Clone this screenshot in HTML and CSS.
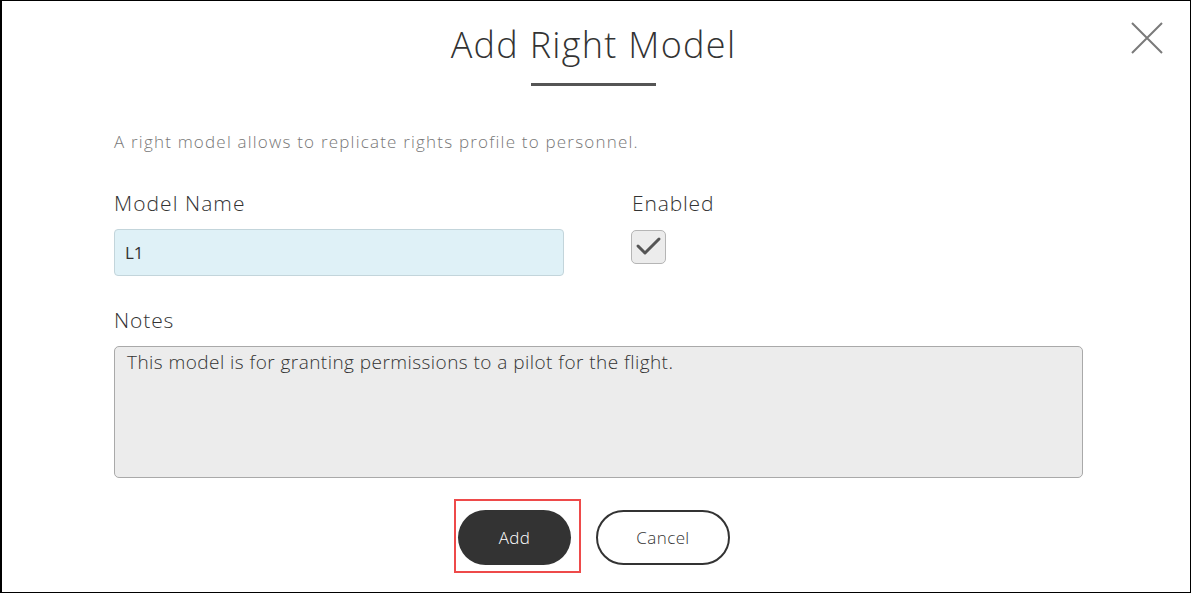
FILE: index.html
```html
<!DOCTYPE html>
<html>
<head>
<meta charset="utf-8">
<link rel="stylesheet" href="styles.css">
</head>
<body>
<div class="dialog">
  <button class="close" aria-label="Close">
    <svg width="32" height="32" viewBox="0 0 32 32"><path d="M1 1 L31 31 M31 1 L1 31" stroke="#7a7a7a" stroke-width="2" fill="none"/></svg>
  </button>
  <div class="header">
    <h1 class="title">Add Right Model</h1>
    <div class="rule"></div>
  </div>
  <div class="content">
    <p class="desc">A right model allows to replicate rights profile to personnel.</p>
    <div class="row">
      <div class="field name-field">
        <label class="label">Model Name</label>
        <div class="input">L1</div>
      </div>
      <div class="field">
        <label class="label label-enabled">Enabled</label>
        <div class="checkbox">
          <svg width="34" height="34" viewBox="0 0 34 34"><path d="M7 16 L14 23 L28 9" stroke="#555" stroke-width="3" fill="none" stroke-linecap="round" stroke-linejoin="round"/></svg>
        </div>
      </div>
    </div>
    <label class="label notes-label">Notes</label>
    <div class="textarea">This model is for granting permissions to a pilot for the flight.</div>
    <div class="actions">
      <span class="highlight"><button class="btn btn-primary">Add</button></span>
      <button class="btn btn-secondary">Cancel</button>
    </div>
  </div>
</div>
</body>
</html>
```
FILE: styles.css
```css
html, body {
  margin: 0;
  padding: 0;
  background: #fff;
}
.dialog {
  box-sizing: border-box;
  width: 1191px;
  height: 593px;
  border: 1px solid #000;
  border-left-width: 2px;
  position: relative;
  font-family: "Open Sans", Lato, sans-serif;
  color: #333;
}
.close {
  position: absolute;
  top: 21px;
  right: 27px;
  width: 32px;
  height: 32px;
  padding: 0;
  border: 0;
  background: none;
}
.close svg { display: block; }
.header {
  padding-top: 22px;
  padding-right: 5px;
  text-align: center;
}
.title {
  margin: 0;
  font-size: 36px;
  font-weight: 300;
  line-height: 44px;
  letter-spacing: 1.3px;
  color: #333;
}
.rule {
  width: 125px;
  height: 3px;
  background: #555;
  margin: 16px auto 0;
}
.content {
  padding: 0 107px 0 112px;
}
.desc {
  margin: 45px 0 0;
  font-size: 17px;
  line-height: 22px;
  letter-spacing: 1.2px;
  color: #777;
  font-weight: 300;
}
.row {
  display: flex;
  gap: 68px;
  margin-top: 37px;
}
.field {
  display: flex;
  flex-direction: column;
}
.name-field {
  width: 450px;
}
.label {
  display: block;
  font-size: 21px;
  line-height: 26px;
  letter-spacing: 1.05px;
  font-weight: 300;
  color: #333;
}
.label-enabled {
  letter-spacing: 0.85px;
}
.input {
  box-sizing: border-box;
  margin-top: 13px;
  height: 47px;
  background: #dff1f7;
  border: 1px solid #c3d5db;
  border-radius: 4px;
  padding: 0 10px;
  font-size: 17px;
  font-weight: 400;
  line-height: 45px;
  color: #333;
}
.checkbox {
  box-sizing: border-box;
  margin-top: 14px;
  width: 35px;
  height: 34px;
  background: #ececec;
  border: 1px solid #b5b5b5;
  border-radius: 5px;
  position: relative;
  left: -1px;
}
.checkbox svg {
  display: block;
  margin: -1px;
}
.notes-label {
  margin-top: 31px;
  letter-spacing: 0.9px;
}
.textarea {
  box-sizing: border-box;
  margin-top: 13px;
  height: 132px;
  background: #ececec;
  border: 1px solid #a9a9a9;
  border-radius: 5px;
  padding: 3px 12px;
  font-size: 19px;
  font-weight: 300;
  line-height: 24px;
  letter-spacing: 0.45px;
  color: #333;
}
.actions {
  display: flex;
  justify-content: center;
  gap: 25px;
  margin-top: 32px;
  padding-right: 9px;
}
.highlight {
  position: relative;
  display: block;
}
.highlight::after {
  content: "";
  position: absolute;
  left: -4px;
  top: -11px;
  right: -10px;
  bottom: -8px;
  border: 2px solid #ee4a4a;
  pointer-events: none;
}
.btn {
  box-sizing: border-box;
  height: 55px;
  border-radius: 28px;
  font-family: "Open Sans", Lato, sans-serif;
  font-size: 17px;
  font-weight: 300;
  letter-spacing: 0.4px;
  padding: 0;
  display: block;
}
.btn-primary {
  width: 113px;
  background: #333;
  color: #fff;
  border: 0;
}
.btn-secondary {
  width: 134px;
  background: #fff;
  color: #333;
  border: 2px solid #333;
}
```
